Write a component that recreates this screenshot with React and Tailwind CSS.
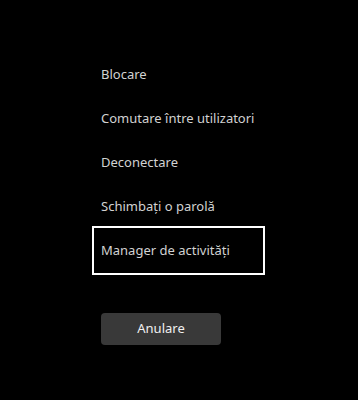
import React from 'react';

const items = [
  'Blocare',
  'Comutare între utilizatori',
  'Deconectare',
  'Schimbați o parolă',
  'Manager de activități',
];

export default function App() {
  const focused = 4;

  return (
    <div
      className="w-[358px] h-[400px] bg-black overflow-hidden"
      style={{ fontFamily: '"Noto Sans", "Open Sans", sans-serif' }}
    >
      <div className="flex flex-col pl-[92px] pt-[50px]">
        {items.map((label, i) => (
          <div
            key={label}
            className={
              'w-[173px] h-[49px] flex items-center px-[7px] border-2 ' +
              (i === focused ? 'border-white' : 'border-transparent') +
              (i === 0 ? '' : ' -mt-[5px]')
            }
          >
            <span className="text-[13px] text-[#d2d2d2] whitespace-nowrap">{label}</span>
          </div>
        ))}

        <button className="mt-[38px] ml-[9px] w-[120px] h-[32px] rounded-[4px] bg-[#393939] text-[13px] text-[#f0f0f0]">
          Anulare
        </button>
      </div>
    </div>
  );
}
